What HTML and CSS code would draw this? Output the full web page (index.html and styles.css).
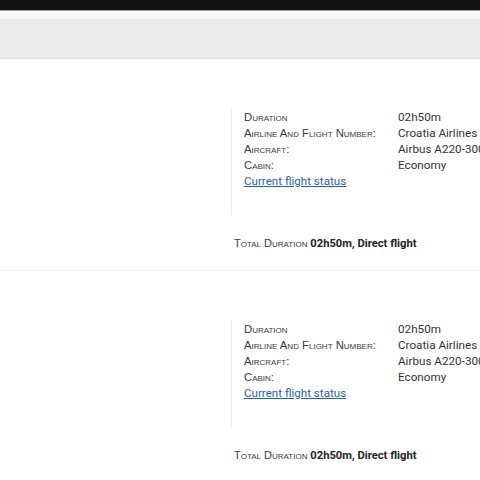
FILE: index.html
```html
<!DOCTYPE html>
<html lang="en">
<head>
  <meta charset="UTF-8">
  <meta name="viewport" content="width=device-width, initial-scale=1.0">
  <title>Flight details</title>
  <link rel="stylesheet" href="styles.css">
</head>
<body>
  <div class="topbar"></div>
  <div class="toolbar">
    <div class="toolbar-strip"></div>
    <div class="toolbar-main"></div>
  </div>

  <div class="flight">
    <div class="flight-side"></div>
    <div class="flight-body">
      <div class="details">
        <div class="row"><span class="label">Duration</span><span class="value">02h50m</span></div>
        <div class="row"><span class="label">Airline And Flight Number:</span><span class="value">Croatia Airlines (OU 4413)</span></div>
        <div class="row"><span class="label">Aircraft:</span><span class="value">Airbus A220-300</span></div>
        <div class="row"><span class="label">Cabin:</span><span class="value">Economy</span></div>
        <a class="status" href="#">Current flight status</a>
      </div>
      <div class="total"><span class="label">Total Duration</span> <b>02h50m, Direct flight</b></div>
    </div>
  </div>

  <div class="flight">
    <div class="flight-side"></div>
    <div class="flight-body">
      <div class="details">
        <div class="row"><span class="label">Duration</span><span class="value">02h50m</span></div>
        <div class="row"><span class="label">Airline And Flight Number:</span><span class="value">Croatia Airlines (OU 4414)</span></div>
        <div class="row"><span class="label">Aircraft:</span><span class="value">Airbus A220-300</span></div>
        <div class="row"><span class="label">Cabin:</span><span class="value">Economy</span></div>
        <a class="status" href="#">Current flight status</a>
      </div>
      <div class="total"><span class="label">Total Duration</span> <b>02h50m, Direct flight</b></div>
    </div>
  </div>
</body>
</html>
```

FILE: styles.css
```css
html, body {
  margin: 0;
  padding: 0;
  overflow: hidden;
}
body {
  font-family: Roboto, "Liberation Sans", sans-serif;
  font-size: 11.7px;
  color: #333;
  background: #fff;
  width: 480px;
}
.topbar {
  height: 10px;
  background: #111;
  border-bottom: 1px solid #9a9a9a;
}
.toolbar-strip {
  height: 8px;
  background: #f7f7f7;
}
.toolbar-main {
  height: 39px;
  background: #ebebeb;
  border-bottom: 1px solid #e2e2e2;
}
.flight {
  display: flex;
  height: 211px;
  border-bottom: 1px solid #f0f0f0;
}
.flight-side {
  width: 231px;
  flex-shrink: 0;
}
.flight-body {
  flex: 1;
  padding-top: 49px;
  min-width: 0;
  overflow: hidden;
}
.details {
  border-left: 1px solid #ececec;
  padding: 1px 0 18px 12px;
  height: 88px;
}
.row {
  display: flex;
  height: 16px;
  line-height: 16px;
  white-space: nowrap;
}
.label {
  font-family: "Liberation Sans", sans-serif;
  font-variant: small-caps;
  font-size: 11.3px;
  color: #3a3a3a;
}
.row .label {
  width: 154px;
  flex-shrink: 0;
}
.value {
  color: #333;
}
.status {
  display: block;
  line-height: 16px;
  font-size: 11.6px;
  color: #1f5fae;
  text-decoration: underline;
}
.total {
  margin-top: 20px;
  padding-left: 3px;
  line-height: 16px;
  white-space: nowrap;
}
.total .label {
  font-size: 11px;
}
.total b {
  font-size: 11.2px;
  color: #222;
  font-weight: 700;
}
```
